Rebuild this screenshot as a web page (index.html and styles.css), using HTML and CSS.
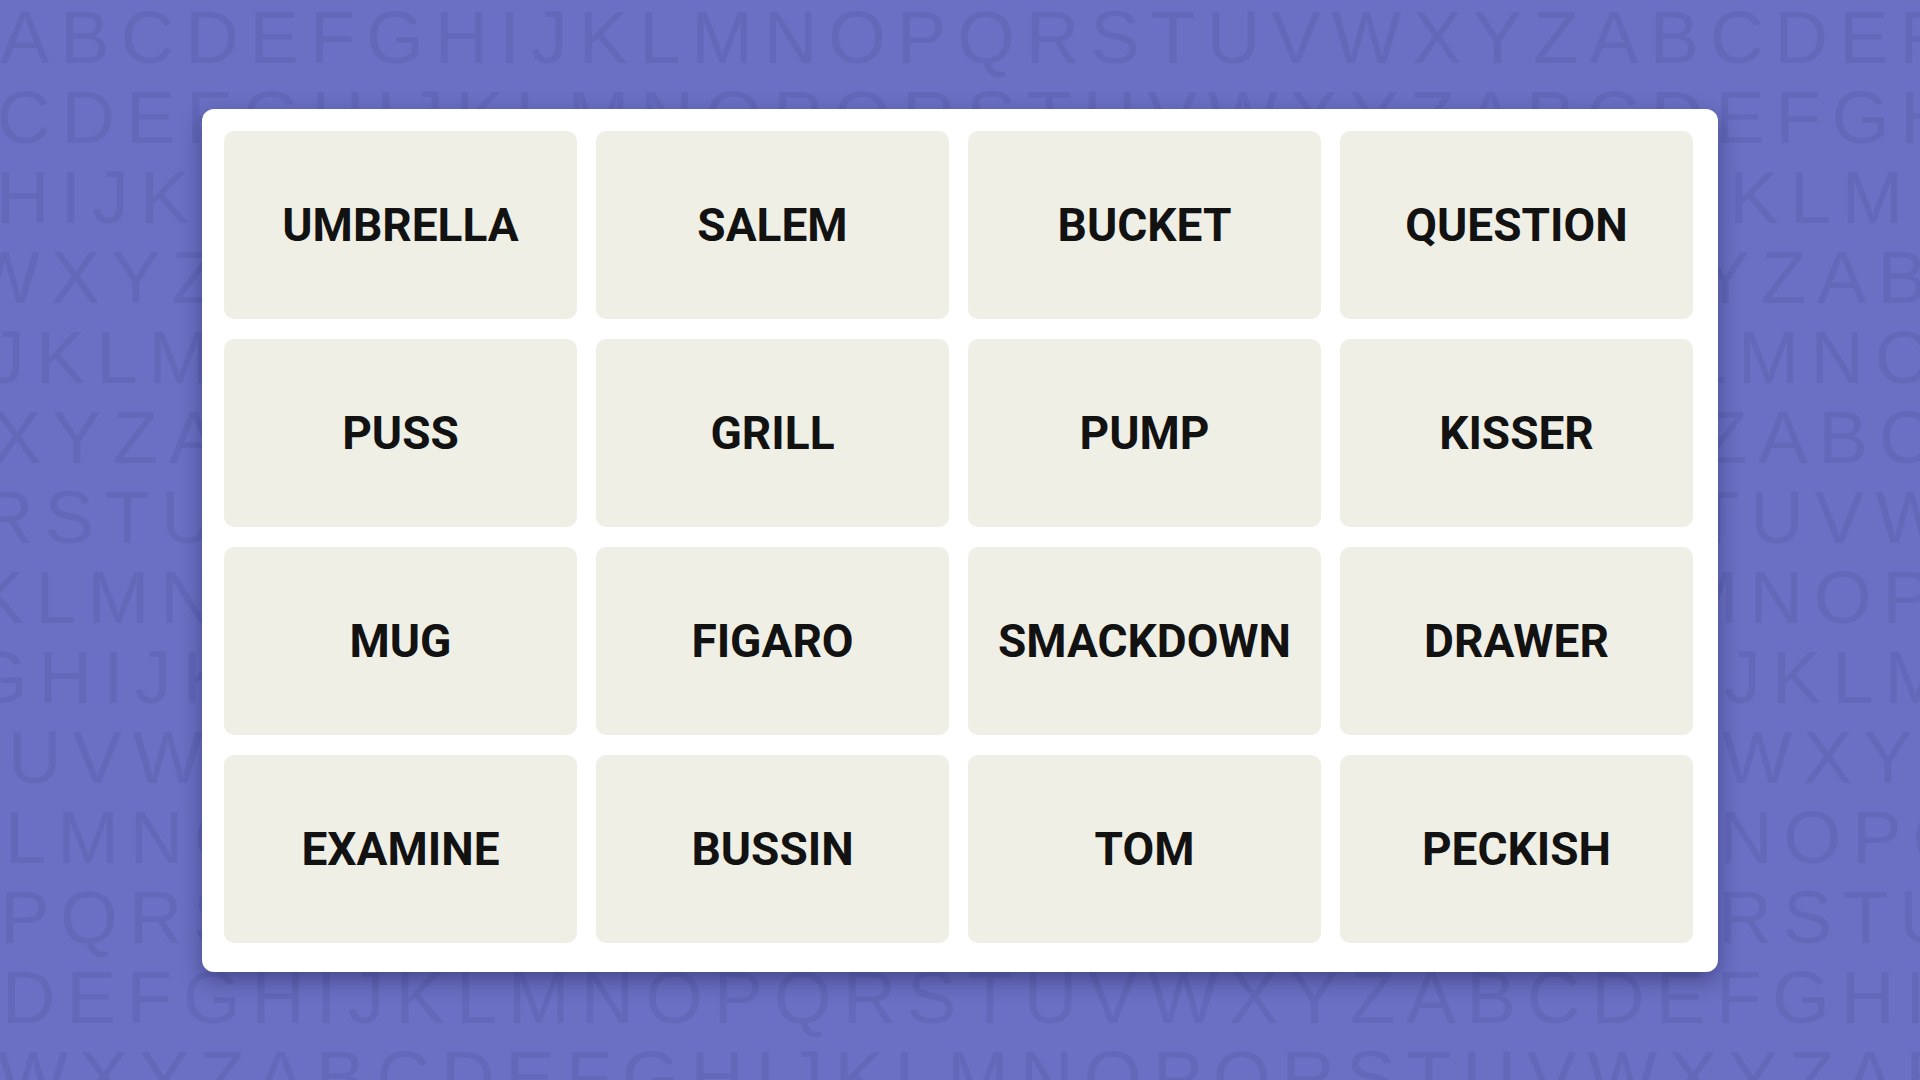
FILE: index.html
```html
<!DOCTYPE html>
<html lang="en">
<head>
    <meta charset="UTF-8">
    <meta name="viewport" content="width=device-width, initial-scale=1.0">
    <title>Connections</title>
    <link rel="stylesheet" href="styles.css">
</head>
<body>
    <div class="letters" aria-hidden="true">
        <div class="line">ABCDEFGHIJKLMNOPQRSTUVWXYZABCDEFGHIJKLMNOPQRSTUVWXYZ</div>
        <div class="line">CDEFGHIJKLMNOPQRSTUVWXYZABCDEFGHIJKLMNOPQRSTUVWXYZAB</div>
        <div class="line">HIJKLMNOPQRSTUVWXYZABCDEFGHIJKLMNOPQRSTUVWXYZABCDEFG</div>
        <div class="line">WXYZABCDEFGHIJKLMNOPQRSTUVWXYZABCDEFGHIJKLMNOPQRSTUV</div>
        <div class="line">JKLMNOPQRSTUVWXYZABCDEFGHIJKLMNOPQRSTUVWXYZABCDEFGHI</div>
        <div class="line">XYZABCDEFGHIJKLMNOPQRSTUVWXYZABCDEFGHIJKLMNOPQRSTUVW</div>
        <div class="line">RSTUVWXYZABCDEFGHIJKLMNOPQRSTUVWXYZABCDEFGHIJKLMNOPQ</div>
        <div class="line">KLMNOPQRSTUVWXYZABCDEFGHIJKLMNOPQRSTUVWXYZABCDEFGHIJ</div>
        <div class="line">GHIJKLMNOPQRSTUVWXYZABCDEFGHIJKLMNOPQRSTUVWXYZABCDEF</div>
        <div class="line">UVWXYZABCDEFGHIJKLMNOPQRSTUVWXYZABCDEFGHIJKLMNOPQRST</div>
        <div class="line">LMNOPQRSTUVWXYZABCDEFGHIJKLMNOPQRSTUVWXYZABCDEFGHIJK</div>
        <div class="line">PQRSTUVWXYZABCDEFGHIJKLMNOPQRSTUVWXYZABCDEFGHIJKLMNO</div>
        <div class="line">DEFGHIJKLMNOPQRSTUVWXYZABCDEFGHIJKLMNOPQRSTUVWXYZABC</div>
        <div class="line">WXYZABCDEFGHIJKLMNOPQRSTUVWXYZABCDEFGHIJKLMNOPQRSTUV</div>
    </div>

    <main class="stage">
        <section class="board">
            <div class="tile">UMBRELLA</div>
            <div class="tile">SALEM</div>
            <div class="tile">BUCKET</div>
            <div class="tile">QUESTION</div>

            <div class="tile">PUSS</div>
            <div class="tile">GRILL</div>
            <div class="tile">PUMP</div>
            <div class="tile">KISSER</div>

            <div class="tile">MUG</div>
            <div class="tile">FIGARO</div>
            <div class="tile">SMACKDOWN</div>
            <div class="tile">DRAWER</div>

            <div class="tile">EXAMINE</div>
            <div class="tile">BUSSIN</div>
            <div class="tile">TOM</div>
            <div class="tile">PECKISH</div>
        </section>
    </main>
</body>
</html>
```

FILE: styles.css
```css
html, body {
    margin: 0;
    padding: 0;
    height: 100%;
}
body {
    background-color: #6b70c4;
    overflow: hidden;
    font-family: Roboto, "Liberation Sans", sans-serif;
}

/* alphabet pattern behind the board */
.letters {
    position: absolute;
    inset: 0;
    overflow: hidden;
    margin-top: -2px;
    font-family: "Liberation Sans", Arial, sans-serif;
    font-size: 74px;
    line-height: 80px;
    letter-spacing: 11px;
    color: #6368b9;
    white-space: nowrap;
    user-select: none;
}
.line:nth-child(1)  { margin-left: 0; }
.line:nth-child(2)  { margin-left: -3px; }
.line:nth-child(3)  { margin-left: -4px; }
.line:nth-child(4)  { margin-left: -30px; }
.line:nth-child(5)  { margin-left: -12px; }
.line:nth-child(6)  { margin-left: -8px; }
.line:nth-child(7)  { margin-left: -20px; }
.line:nth-child(8)  { margin-left: -25px; }
.line:nth-child(9)  { margin-left: -30px; }
.line:nth-child(10) { margin-left: 8px; }
.line:nth-child(11) { margin-left: 5px; }
.line:nth-child(12) { margin-left: 0; }
.line:nth-child(13) { margin-left: 2px; }
.line:nth-child(14) { margin-left: -2px; }

.stage {
    position: relative;
    z-index: 1;
    height: 100%;
    display: flex;
    align-items: center;
    justify-content: center;
}

.board {
    background-color: #fff;
    border-radius: 12px;
    padding: 22px 25px 29px 22px;
    display: grid;
    grid-template-columns: repeat(4, 353px);
    grid-template-rows: repeat(4, 188px);
    column-gap: 19px;
    row-gap: 20px;
    box-shadow: 0 8px 22px rgba(25, 25, 70, 0.45);
}

.tile {
    background-color: #efefe6;
    border-radius: 10px;
    display: flex;
    align-items: center;
    justify-content: center;
    font-size: 46px;
    font-weight: 700;
    color: #121212;
}
```
